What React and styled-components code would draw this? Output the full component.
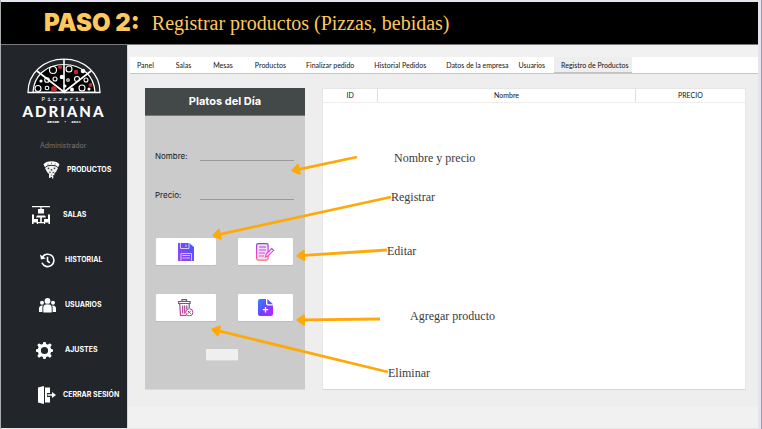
import React from "react";
import styled, { createGlobalStyle } from "styled-components";

const GlobalStyle = createGlobalStyle`
  * { box-sizing: border-box; }
  body { margin: 0; background: #e3e5ee; }
  button, input { font: inherit; color: inherit; border: 0; padding: 0; margin: 0; border-radius: 0; }
`;

const sans = `Lato, "Open Sans", sans-serif`;
const geometric = `Inter, "Open Sans", sans-serif`;
const serif = `"Liberation Serif", serif`;

const Slide = styled.div`
  position: relative;
  display: flex;
  flex-direction: column;
  min-height: 100vh;
  padding: 2px 3px 0 0;
  border-left: 1px solid #a9adb1;
  border-right: 1px solid #a98be8;
  font-family: ${sans};
`;

const Banner = styled.header`
  display: flex;
  align-items: center;
  gap: 12px;
  height: 43px;
  padding-left: 43px;
  background: #000;
  border-bottom: 1px solid #77797b;
  color: #ffc85c;
`;

const Step = styled.strong`
  font: 900 24px/32px ${geometric};
`;

const Title = styled.h1`
  margin: 0;
  font: 400 20px/32px ${serif};
`;

const Columns = styled.div`
  display: flex;
  flex: 1;
  background: #f1f1f1;
  border-bottom: 1px solid #e6e6e6;
`;

const Sidebar = styled.aside`
  flex: 0 0 126px;
  padding-top: 13px;
  background: #22262a;
`;

const Brand = styled.div`
  display: flex;
  flex-direction: column;
  align-items: center;
  color: #fff;
  font-family: ${geometric};
`;

const BrandKind = styled.span`
  margin-top: 2px;
  font: 400 6px/7px "Liberation Mono", monospace;
  letter-spacing: 2px;
`;

const BrandName = styled.strong`
  font: 900 15px/17px Lato, sans-serif;
  letter-spacing: 2px;
`;

const BrandSince = styled.span`
  font: 700 4px/5px "Liberation Mono", monospace;
  white-space: pre;
`;

const Role = styled.p`
  margin: 16px 0 0 39px;
  color: #777776;
  font: 400 7px/10px ${geometric};
`;

const Nav = styled.nav`
  display: flex;
  flex-direction: column;
  gap: 25px;
  margin-top: 9px;
`;

const NavLink = styled.a`
  display: flex;
  align-items: center;
  gap: ${(p) => p.$gap}px;
  height: 20px;
  padding-left: ${(p) => p.$inset}px;
  color: #fff;
  font: 700 7px/10px ${geometric};
  text-decoration: none;
  white-space: nowrap;
  svg { flex: none; }
`;

const Main = styled.main`
  flex: 1;
  min-width: 0;
  padding-top: 12px;
  border-left: 1px solid #d7d7d7;
`;

const Tabs = styled.div`
  display: flex;
  margin-left: 2px;
  background: #fff;
  border-bottom: 1px solid #c6c6c6;
`;

const Tab = styled.button`
  height: 16px;
  padding: 0 ${(p) => p.$after}px 0 7px;
  background: ${(p) => (p.$active ? "#eeeeee" : "#fff")};
  box-shadow: ${(p) => (p.$active ? "inset 0 -1px #c3c3c3" : "none")};
  color: #111;
  font: 400 7px/16px ${sans};
  white-space: nowrap;
`;

const Workspace = styled.div`
  display: grid;
  grid-template-columns: 160px 1fr;
  gap: 17px;
  padding: 14px 12px 17px 17px;
  background: #eee;
`;

const Card = styled.form`
  background: #cbcbcb;
  border-bottom: 1px solid #d9d9d9;
`;

const CardTitle = styled.h2`
  margin: 0;
  height: 28px;
  background: #434849;
  border-bottom: 1px solid #737777;
  color: #fff;
  font: 700 11px/27px ${geometric};
  text-align: center;
`;

const Fields = styled.div`
  display: grid;
  gap: 24px;
  padding: 30px 11px 38px 10px;
`;

const Field = styled.label`
  display: grid;
  grid-template-columns: 45px 1fr;
  align-items: end;
  color: #16181c;
  font: 400 8px/10px ${geometric};
`;

const TextInput = styled.input`
  width: 100%;
  height: 15px;
  background: transparent;
  border-bottom: 1px solid #999;
  outline: none;
`;

const Actions = styled.div`
  display: grid;
  grid-template-columns: 60fr 55fr;
  gap: 29px 22px;
  padding: 0 12px 0 11px;
`;

const Action = styled.button`
  display: flex;
  align-items: center;
  justify-content: center;
  height: 27px;
  background: #fff;
  border-radius: 1px;
  box-shadow: 0 1px #bdbdbd;
`;

const CodeInput = styled.input`
  display: block;
  width: 32px;
  height: 12px;
  margin: 28px 0 28px 61px;
  background: #efefef;
  border-bottom: 1px solid #dadada;
`;

const TableFrame = styled.div`
  background: #fff;
  border: 1px solid #e6e6e6;
  border-bottom-color: #d6d6d6;
`;

const Table = styled.table`
  width: 100%;
  border-collapse: collapse;
  table-layout: fixed;
`;

const HeadCell = styled.th`
  width: ${(p) => p.$width};
  height: 13px;
  padding: 0;
  border-bottom: 1px solid #ededed;
  color: #111;
  font: 400 7px/12px ${sans};
  & + & { border-left: 1px solid #dedede; }
`;

const Annotations = styled.div`
  position: absolute;
  inset: 0;
  pointer-events: none;
`;

const Arrows = styled.svg`
  position: absolute;
  top: 0;
  left: 0;
`;

const Note = styled.span`
  position: absolute;
  left: ${(p) => p.$x}px;
  top: ${(p) => p.$y}px;
  color: #3a3a3a;
  font: 400 12px/14px ${serif};
  white-space: nowrap;
`;

function PizzaLogo() {
  return (
    <svg width="74" height="36" viewBox="0 0 74 36" fill="none" stroke="#fff">
      <path d="M1 34.5C1 15 17 1.200 37 1.200S73 15 73 34.500Z" strokeWidth="1.300" />
      <path d="M6 34C7 18 19 6.500 37 6.500S67 18 68 34Z" fill="#000" strokeWidth="1.200" />
      <path d="M37 1v33L10 13M37 34l27-21" strokeWidth="1.600" />
      <g strokeWidth="1.100">
        <circle cx="26" cy="12" r="3.500" /><circle cx="42" cy="11" r="3" />
        <circle cx="11" cy="30.500" r="3" /><circle cx="20" cy="22" r="2.300" />
        <circle cx="28" cy="21" r="2" /><circle cx="50" cy="21" r="2.500" />
        <circle cx="59" cy="22" r="2" /><circle cx="55" cy="30" r="3" />
        <circle cx="20" cy="30" r="1.800" /><circle cx="41" cy="22" r="1.300" />
      </g>
      <g fill="#fff" stroke="none">
        <circle cx="56" cy="13" r="2.300" /><circle cx="35" cy="19" r="2.300" />
        <circle cx="14" cy="23" r="1.600" /><circle cx="45" cy="31.500" r="2" />
        <circle cx="38" cy="28" r="1.500" /><circle cx="62" cy="31" r="1.500" />
      </g>
      <g fill="#c0282e" stroke="none">
        <circle cx="33" cy="9" r="2" /><circle cx="49" cy="14" r="2.200" />
        <circle cx="27" cy="31" r="2.900" /><circle cx="63.500" cy="27" r="2" />
      </g>
    </svg>
  );
}

function SliceIcon() {
  return (
    <svg width="17" height="18" viewBox="0 0 17 18">
      <path d="M.5 3.500C3-.8 14-.8 16.500 3.500L15 6.200C12 3 5 3 2 6.200Z" fill="#fff" />
      <path d="M2 7c3-3 10-3 13 0l-2 4-1.500 1v2H10.300v3.500H9V16H7.500v1H6v-4L4 11Z" fill="#f0f0f0" />
      <g fill="#44494d">
        <circle cx="5.500" cy="7.300" r=".9" /><circle cx="8.500" cy="8.800" r=".9" /><circle cx="11.500" cy="7.300" r=".9" />
        <circle cx="7" cy="11.300" r=".8" /><circle cx="10.300" cy="11.500" r=".8" /><circle cx="8.500" cy="14" r=".6" />
        <circle cx="5" cy="3" r=".6" /><circle cx="8.500" cy="2.200" r=".6" /><circle cx="12" cy="3" r=".6" />
      </g>
    </svg>
  );
}

function BoothIcon() {
  return (
    <svg width="18" height="18" viewBox="0 0 18 18" fill="#fff">
      <path d="M0 0h18v1.200H9.600V3H12v4.500H6V3h2.400V1.200H0ZM5 9.500h8l1 2H9.800V16H12v1.200H6V16h2.200v-4.500H4Z" />
      <path d="M0 8.500h2V13h4v5H4.800v-1.500H1.500V18H0ZM18 8.500h-2V13h-4v5h1.200v-1.500h3.300V18H18Z" />
    </svg>
  );
}

function HistoryIcon() {
  return (
    <svg width="15" height="15" viewBox="0 0 15 15" fill="none" stroke="#fff" strokeWidth="1.600">
      <path d="M2.200 4.600A6.200 6.200 0 1 1 2 9.800" />
      <path d="M0 1.500 1 6.500l4.800-1Z" fill="#fff" stroke="none" />
      <path d="M7.500 3.800V8l2.300 1.800" />
    </svg>
  );
}

function PeopleIcon() {
  return (
    <svg width="17" height="15" viewBox="0 0 17 15" fill="#fff">
      <circle cx="8.500" cy="2.900" r="2.900" /><circle cx="3" cy="4.800" r="2" /><circle cx="14" cy="4.800" r="2" />
      <path d="M4.300 14.500V9.500a4.200 3.200 0 0 1 8.400 0v5ZM0 14V10a3 2.800 0 0 1 3.800-2.500l-.4 2V14ZM17 14V10a3 2.800 0 0 0-3.800-2.500l.4 2V14Z" />
    </svg>
  );
}

function GearIcon() {
  return (
    <svg width="17" height="17" viewBox="0 0 17 17" stroke="#fff" fill="none">
      <circle cx="8.500" cy="8.500" r="5.200" strokeWidth="3.200" />
      <path d="M8.500 1.500v1M8.500 14.500v1M1.500 8.500h1M14.500 8.500h1M3.200 3.200l.8.8M13 13l.8.8M13.800 3.200l-.8.8M4 13l-.8.8" strokeWidth="3.200" strokeLinecap="round" />
    </svg>
  );
}

function ExitIcon() {
  return (
    <svg width="18" height="18" viewBox="0 0 18 18" fill="#fff">
      <path d="M0 1.500 6 0v18L0 16.500Z" />
      <path d="M7 1.500h5V7H9v4h3v5.500H7Z" />
      <path d="M9.500 8.200H14V6l4 3-4 3V9.800H9.500Z" />
    </svg>
  );
}

function SaveIcon() {
  return (
    <svg width="16" height="18" viewBox="0 0 16 18">
      <defs><linearGradient id="save" x1="1" y1="0" x2="0" y2="1"><stop stopColor="#3b5bff" /><stop offset="1" stopColor="#a63df2" /></linearGradient></defs>
      <path d="M0 0h11l5 4v14H0Z" fill="url(#save)" />
      <path d="M2.500 0v5.500H11V0M8 1.500v2.500M3 17.500V10.500h10.500v7M4.500 12.500H12M4.500 15H12" fill="none" stroke="#d6c8ff" />
    </svg>
  );
}

function EditIcon() {
  return (
    <svg width="19" height="18" viewBox="0 0 19 18" fill="none" stroke="url(#edit)">
      <defs><linearGradient id="edit" gradientUnits="userSpaceOnUse" x1="6" y1="0" x2="6" y2="18"><stop stopColor="#7457b8" /><stop offset=".5" stopColor="#e33de0" /><stop offset="1" stopColor="#ff7358" /></linearGradient></defs>
      <rect x=".6" y=".6" width="11.500" height="16.500" rx="1.500" fill="#f5d9fb" strokeWidth="1.200" />
      <path d="M3 4h7M3 7h7M3 10h6M3 13h5" />
      <path d="m9.500 14 .7-3 5.500-5.500 1.800 1.800-5.500 5.600Z" fill="#fff" strokeWidth="1.200" />
    </svg>
  );
}

function TrashIcon() {
  return (
    <svg width="16" height="18" viewBox="0 0 16 18" fill="none" stroke="url(#trash)">
      <defs><linearGradient id="trash" gradientUnits="userSpaceOnUse" x1="12" y1="0" x2="3" y2="17"><stop stopColor="#5552a8" /><stop offset="1" stopColor="#e23a86" /></linearGradient></defs>
      <path d="M4 2V.6h4.500V2M.6 2.500h11.500v2H.6ZM1.700 4.500l.8 11.900h6M11.200 4.500V9M4.700 6.500v8M6.700 6.500v8M8.800 6.500V10" strokeWidth="1.200" />
      <circle cx="11.300" cy="13.300" r="3.600" fill="#fff" /><path d="m9.800 11.800 3 3M12.800 11.800l-3 3" />
    </svg>
  );
}

function NewFileIcon() {
  return (
    <svg width="15" height="17" viewBox="0 0 15 17">
      <defs><linearGradient id="newfile" x1="0" y1="0" x2="1" y2="1"><stop stopColor="#2489ff" /><stop offset=".5" stopColor="#6a45ff" /><stop offset="1" stopColor="#d41cf5" /></linearGradient></defs>
      <path d="M2 0h6v4.500A2 2 0 0 0 10 6.500h5V15a2 2 0 0 1-2 2H2a2 2 0 0 1-2-2V2a2 2 0 0 1 2-2Z" fill="url(#newfile)" />
      <path d="M9.300 0 15 5.300h-4.500a1.200 1.200 0 0 1-1.200-1.200Z" fill="#5358ff" />
      <path d="M7.500 8v5.500M4.800 10.700h5.400" stroke="#fff" strokeWidth="1.300" />
    </svg>
  );
}

const links = [
  { label: "PRODUCTOS", icon: <SliceIcon />, inset: 42, gap: 7 },
  { label: "SALAS", icon: <BoothIcon />, inset: 31, gap: 13 },
  { label: "HISTORIAL", icon: <HistoryIcon />, inset: 39, gap: 10 },
  { label: "USUARIOS", icon: <PeopleIcon />, inset: 38, gap: 9 },
  { label: "AJUSTES", icon: <GearIcon />, inset: 35, gap: 12 },
  { label: "CERRAR SESIÓN", icon: <ExitIcon />, inset: 37, gap: 7 },
];

const tabs = [
  { label: "Panel", after: 15 },
  { label: "Salas", after: 15 },
  { label: "Mesas", after: 15 },
  { label: "Productos", after: 13 },
  { label: "Finalizar pedido", after: 13 },
  { label: "Historial Pedidos", after: 13 },
  { label: "Datos de la empresa", after: 3 },
  { label: "Usuarios", after: 9 },
  { label: "Registro de Productos", after: 3, active: true },
];

const actions = [
  { label: "Registrar", icon: <SaveIcon /> },
  { label: "Editar", icon: <EditIcon /> },
  { label: "Eliminar", icon: <TrashIcon /> },
  { label: "Agregar producto", icon: <NewFileIcon /> },
];

const notes = [
  { text: "Nombre y precio", x: 393, y: 151, from: [356, 157], to: [290, 171] },
  { text: "Registrar", x: 390, y: 190, from: [390, 197], to: [211, 236] },
  { text: "Editar", x: 386, y: 244, from: [386, 250], to: [295, 256] },
  { text: "Agregar producto", x: 409, y: 309, from: [379, 319], to: [295, 320] },
  { text: "Eliminar", x: 387, y: 366, from: [387, 372], to: [210, 329] },
];

function Arrow({ from, to }) {
  const length = Math.hypot(to[0] - from[0], to[1] - from[1]);
  const angle = (Math.atan2(from[1] - to[1], from[0] - to[0]) * 180) / Math.PI;
  return (
    <g transform={`translate(${to[0]} ${to[1]}) rotate(${angle})`} fill="#ffa908">
      <path d="M1 -1 7.500 -5.500Q9 -6 9 -4.500V4.500Q9 6 7.500 5.500L1 1Q0 0 1 -1Z" />
      <rect x="8" y="-1.400" width={length - 8} height="2.800" />
    </g>
  );
}

export default function App() {
  return (
    <>
      <GlobalStyle />
      <Slide>
        <Banner>
          <Step>PASO 2:</Step>
          <Title>Registrar productos (Pizzas, bebidas)</Title>
        </Banner>
        <Columns>
          <Sidebar>
            <Brand>
              <PizzaLogo />
              <BrandKind>Pizzeria</BrandKind>
              <BrandName>ADRIANA</BrandName>
              <BrandSince>DESDE  •  2021</BrandSince>
            </Brand>
            <Role>Administrador</Role>
            <Nav>
              {links.map((l) => (
                <NavLink key={l.label} href="#" $inset={l.inset} $gap={l.gap}>
                  {l.icon}
                  {l.label}
                </NavLink>
              ))}
            </Nav>
          </Sidebar>
          <Main>
            <Tabs role="tablist">
              {tabs.map((t) => (
                <Tab key={t.label} type="button" role="tab" aria-selected={!!t.active} $active={t.active} $after={t.after}>
                  {t.label}
                </Tab>
              ))}
            </Tabs>
            <Workspace>
              <Card>
                <CardTitle>Platos del Día</CardTitle>
                <Fields>
                  <Field>Nombre:<TextInput type="text" name="nombre" /></Field>
                  <Field>Precio:<TextInput type="text" name="precio" /></Field>
                </Fields>
                <Actions>
                  {actions.map((a) => (
                    <Action key={a.label} type="button" aria-label={a.label}>{a.icon}</Action>
                  ))}
                </Actions>
                <CodeInput type="text" aria-label="Código" />
              </Card>
              <TableFrame>
                <Table>
                  <thead>
                    <tr>
                      <HeadCell $width="13%">ID</HeadCell>
                      <HeadCell $width="61%">Nombre</HeadCell>
                      <HeadCell $width="26%">PRECIO</HeadCell>
                    </tr>
                  </thead>
                </Table>
              </TableFrame>
            </Workspace>
          </Main>
        </Columns>
        <Annotations>
          <Arrows width="400" height="400">
            {notes.map((n) => <Arrow key={n.text} from={n.from} to={n.to} />)}
          </Arrows>
          {notes.map((n) => <Note key={n.text} $x={n.x} $y={n.y}>{n.text}</Note>)}
        </Annotations>
      </Slide>
    </>
  );
}
